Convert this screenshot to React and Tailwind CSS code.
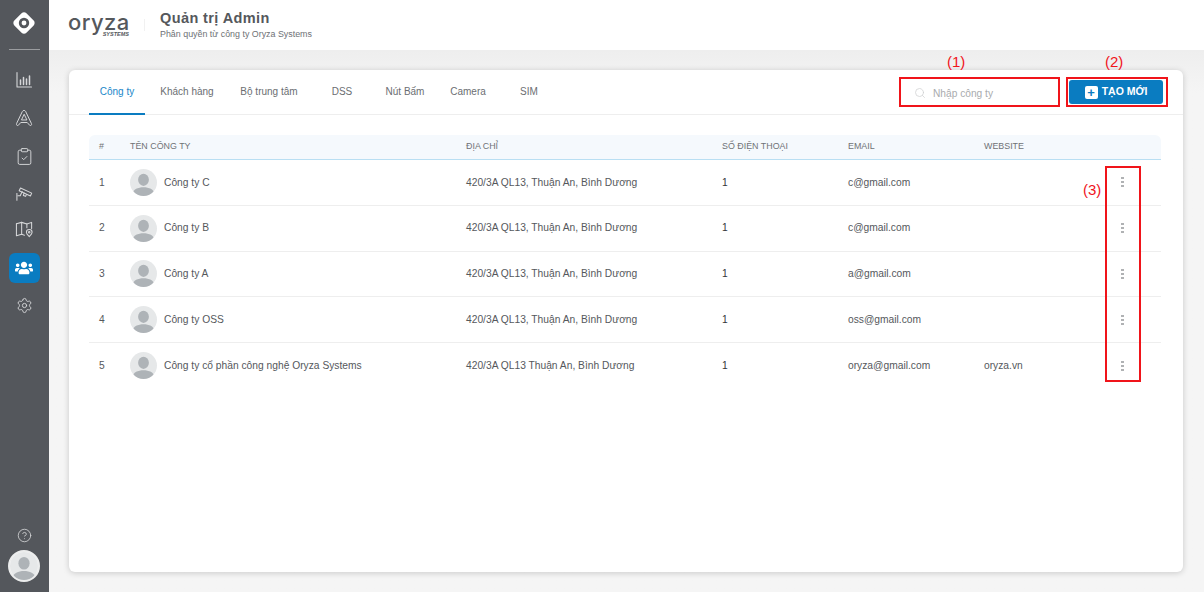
import React from "react";
import {CircleHelp, ClipboardCheck, Search, Settings} from "lucide-react";
import {FaUsers} from "react-icons/fa";

const tabs = [
  {name: "Công ty", width: "w-[56px]", active: true},
  {name: "Khách hàng", width: "w-[84px]"},
  {name: "Bộ trung tâm", width: "w-[80px]"},
  {name: "DSS", width: "w-[66px]"},
  {name: "Nút Bấm", width: "w-[60px]"},
  {name: "Camera", width: "w-[66px]"},
  {name: "SIM", width: "w-[56px]"},
];

const rows = [
  {id: 1, name: "Công ty C", address: "420/3A QL13, Thuận An, Bình Dương", phone: "1", email: "c@gmail.com", website: ""},
  {id: 2, name: "Công ty B", address: "420/3A QL13, Thuận An, Bình Dương", phone: "1", email: "c@gmail.com", website: ""},
  {id: 3, name: "Công ty A", address: "420/3A QL13, Thuận An, Bình Dương", phone: "1", email: "a@gmail.com", website: ""},
  {id: 4, name: "Công ty OSS", address: "420/3A QL13, Thuận An, Bình Dương", phone: "1", email: "oss@gmail.com", website: ""},
  {id: 5, name: "Công ty cổ phần công nghệ Oryza Systems", address: "420/3A QL13 Thuận An, Bình Dương", phone: "1", email: "oryza@gmail.com", website: "oryza.vn"},
];

const gridCols = "grid grid-cols-[31px_336px_256px_126px_136px_1fr] items-center";

/**
 * Grey person placeholder used for the avatars.
 */
const Avatar = ({className}) => (
  <svg viewBox="0 0 40 40" className={className}>
    <defs>
      <clipPath id="avatar-clip">
        <circle cx="20" cy="20" r="20"/>
      </clipPath>
    </defs>
    <g clipPath="url(#avatar-clip)">
      <rect width="40" height="40" fill="#e6e8e9"/>
      <ellipse cx="20" cy="16" rx="8" ry="9" fill="#aeb3b7"/>
      <path d="M4 37c0-7 8-10 16-10s16 3 16 10v3H4z" fill="#aeb3b7"/>
    </g>
  </svg>
);

const LogoMark = () => (
  <svg viewBox="0 0 28 28" className="w-[26px] h-[26px]">
    <path d="M14 2.5c1 0 1.8.4 2.6 1.1l7.8 7.8c1.4 1.4 1.4 3.8 0 5.2l-7.8 7.8c-1.4 1.4-3.8 1.4-5.2 0l-7.8-7.8c-1.4-1.4-1.4-3.8 0-5.2l7.8-7.8c.8-.7 1.6-1.1 2.6-1.1z"
          fill="#fff"/>
    <circle cx="14" cy="14" r="5.6" fill="#54575c"/>
    <circle cx="14" cy="14" r="2.6" fill="#fff"/>
  </svg>
);

const iconStroke = {fill: "none", stroke: "#d6d7d9", strokeWidth: 1.1, strokeLinejoin: "round", strokeLinecap: "round"};

const ChartIcon = () => (
  <svg viewBox="0 0 18 18" {...iconStroke} className="w-[18px] h-[18px]">
    <path d="M2 1.5V16h14.5"/>
    <path d="M5.5 13.5V9M8.5 13.5V6.5M11.5 13.5V8M14.5 13.5V5" strokeWidth="1.5"/>
  </svg>
);

const TriangleA = () => (
  <svg viewBox="0 0 20 20" {...iconStroke} className="w-[18px] h-[18px]">
    <path d="M8.3 2.5c.7-1.3 2.7-1.3 3.4 0l6.6 13.8c.6 1.5-.8 2.6-2 1.8L13.6 15H6.4l-2.7 3.1c-1.2.8-2.6-.3-2-1.8z"/>
    <path d="M10 6.2 7.2 12.2h5.6z"/>
  </svg>
);

const CameraIcon = () => (
  <svg viewBox="0 0 20 20" {...iconStroke} className="w-[19px] h-[19px]">
    <path d="M5.8 4.2 17.6 9.6l-1.4 3-11.800-5.400z"/>
    <path d="M7.500 8 5.500 12.400H3"/>
    <path d="M2 10v7"/>
    <path d="M9.600 9.600 8.800 12l2.400 1 .8-1.800"/>
  </svg>
);

const MapIcon = () => (
  <svg viewBox="0 0 20 20" {...iconStroke} className="w-[19px] h-[19px]">
    <path d="M1.5 4 7 2.5l5.5 1.6L17.5 2.5V9"/>
    <path d="M1.5 4v12.5L7 15l3 1"/>
    <path d="M7 2.5V15M12.5 4.100v4"/>
    <path d="M15 10c1.800 0 3 1.200 3 2.800 0 1.700-1.700 3.300-3 4.700-1.300-1.400-3-3-3-4.700 0-1.600 1.200-2.800 3-2.800z"/>
    <circle cx="15" cy="12.800" r=".8"/>
  </svg>
);

const Sidebar = () => (
  <aside className="w-[49px] h-full shrink-0 bg-[#54575c] flex flex-col items-center pr-[1px]">
    <div className="h-[49px] w-full flex items-center justify-center shrink-0 pb-[4px]">
      <LogoMark/>
    </div>
    <div className="w-[31px] h-px bg-[#9a9c9f]"/>

    <div className="flex flex-col items-center mt-[11px] text-[#d6d7d9]">
      <div className="h-[38px] flex items-center"><ChartIcon/></div>
      <div className="h-[38px] flex items-center"><TriangleA/></div>
      <div className="h-[38px] flex items-center"><ClipboardCheck size={19} strokeWidth={1.2}/></div>
      <div className="h-[37px] flex items-center"><CameraIcon/></div>
      <div className="h-[35px] flex items-center"><MapIcon/></div>
      <div className="w-[31px] h-[30px] mt-[6px] rounded-md bg-[#0a7cc1] flex items-center justify-center text-white">
        <FaUsers size={18}/>
      </div>
      <div className="h-[44px] flex items-center"><Settings size={17} strokeWidth={1.3}/></div>
    </div>

    <div className="mt-auto flex flex-col items-center text-[#d6d7d9]">
      <CircleHelp size={15} strokeWidth={1.3}/>
      <div className="mt-[7px] mb-[10px] rounded-full border-2 border-[#eceded] bg-white">
        <Avatar className="w-[28px] h-[28px] block"/>
      </div>
    </div>
  </aside>
);

const Header = () => (
  <header className="h-[50px] shrink-0 bg-white flex items-center">
    <div className="w-[61px] ml-[19px] flex flex-col leading-none">
      <span className="text-[22px] leading-[18px] text-[#55585c] font-['Inter',sans-serif] font-medium tracking-[0.4px] -mt-[2px]">oryza</span>
      <span className="text-[5.5px] leading-[4px] font-bold italic text-[#55585c] self-end mt-[1px]">SYSTEMS</span>
    </div>
    <div className="w-px h-[12px] bg-[#f1f1f1] ml-[15px]"/>
    <div className="ml-[15px] pb-[1px]">
      <h1 className="text-[14.5px] leading-[17px] font-bold text-[#55585c] tracking-[0.4px]">Quản trị Admin</h1>
      <p className="text-[8.9px] leading-[12px] text-[#6e7175] mt-[1px]">Phân quyền từ công ty Oryza Systems</p>
    </div>
  </header>
);

const TabBar = () => (
  <div className="h-[45px] shrink-0 border-b border-[#eeeeee] flex items-stretch pl-[20px] pr-[16px]">
    {tabs.map(({name, width, active}) => (
      <div key={name}
           className={`${width} flex items-center justify-center text-[10px] -mb-px ${active ? "text-[#1a87c9] border-b-2 border-[#0a7cc1]" : "text-[#6b6e72] border-b-2 border-transparent"}`}>
        {name}
      </div>
    ))}

    <div className="ml-auto flex items-center gap-[8px]">
      <div className="w-[160px] h-[30px] flex items-center pl-[15px] pt-[1px] text-[#cfd0d2]">
        <Search size={12} strokeWidth={1.5}/>
        <span className="ml-[7px] text-[10.200px] pt-[2px] text-[#a9abae]">Nhập công ty</span>
      </div>
      <button type="button"
              className="w-[100px] h-[30px] flex items-center pl-[2px] pr-[4px]">
        <span className="w-full h-[24px] rounded-[3px] bg-[#0a7cc1] text-white flex items-center justify-center gap-[4px] text-[10.500px] font-bold">
          <span className="w-[13px] h-[13px] rounded-[2px] bg-white flex items-center justify-center text-[#0a7cc1] text-[13px] leading-none font-bold">+</span>
          TẠO MỚI
        </span>
      </button>
    </div>
  </div>
);

const CompanyTable = () => (
  <div className="ml-[20px] mr-[22px] mt-[20px]">
    <div className={`${gridCols} h-[25px] bg-[#f5f9fd] rounded-t-md border-b border-[#b9dff3] pl-[10px] text-[8.9px] text-[#6f7276]`}>
      <div>#</div>
      <div>TÊN CÔNG TY</div>
      <div>ĐỊA CHỈ</div>
      <div>SỐ ĐIỆN THOẠI</div>
      <div>EMAIL</div>
      <div>WEBSITE</div>
    </div>

    {rows.map(({id, name, address, phone, email, website}) => (
      <div key={id}
           className={`${gridCols} relative h-[45.75px] border-b border-[#eeeeee] last:border-b-0 pl-[10px] text-[10.250px] text-[#55585c]`}>
        <div>{id}</div>
        <div className="flex items-center gap-[7px]">
          <Avatar className="w-[27px] h-[27px] shrink-0"/>
          {name}
        </div>
        <div>{address}</div>
        <div className="text-[#33363a]">{phone}</div>
        <div>{email}</div>
        <div>{website}</div>
        <div className="absolute left-[1032px] top-1/2 -translate-y-1/2 flex flex-col gap-[2px]">
          <span className="w-[3px] h-[2px] bg-[#b0b2b4]"/>
          <span className="w-[3px] h-[2px] bg-[#b0b2b4]"/>
          <span className="w-[3px] h-[2px] bg-[#b0b2b4]"/>
        </div>
      </div>
    ))}
  </div>
);

// Red markers drawn on top of the screenshot
const Annotations = () => (
  <>
    <div className="absolute left-[899px] top-[77px] w-[161px] h-[30px] border-2 border-[#f0141a]"/>
    <div className="absolute left-[1066px] top-[77px] w-[102px] h-[30px] border-2 border-[#f0141a]"/>
    <div className="absolute left-[1105px] top-[166px] w-[36px] h-[216px] border-2 border-[#f0141a]"/>
    <span className="absolute left-[947px] top-[53px] text-[15px] leading-[18px] text-[#f0141a]">(1)</span>
    <span className="absolute left-[1105px] top-[53px] text-[15px] leading-[18px] text-[#f0141a]">(2)</span>
    <span className="absolute left-[1083px] top-[181px] text-[15px] leading-[18px] text-[#f0141a]">(3)</span>
  </>
);

const App = () => (
  <div className="relative w-[1204px] h-[592px] overflow-hidden flex bg-[#f3f3f3] font-['Liberation_Sans',Arial,sans-serif]">
    <Sidebar/>
    <main className="flex-1 flex flex-col min-w-0">
      <Header/>
      <div className="flex-1 pt-[20px] pb-[20px] pl-[20px] pr-[21px] bg-gradient-to-b from-[#eeeeee] to-[#f5f5f5] to-[8%]">
        <section className="h-full bg-white rounded-md shadow-[0_1px_6px_rgba(0,0,0,0.18)] flex flex-col">
          <TabBar/>
          <CompanyTable/>
        </section>
      </div>
    </main>
    <Annotations/>
  </div>
);

export default App;
